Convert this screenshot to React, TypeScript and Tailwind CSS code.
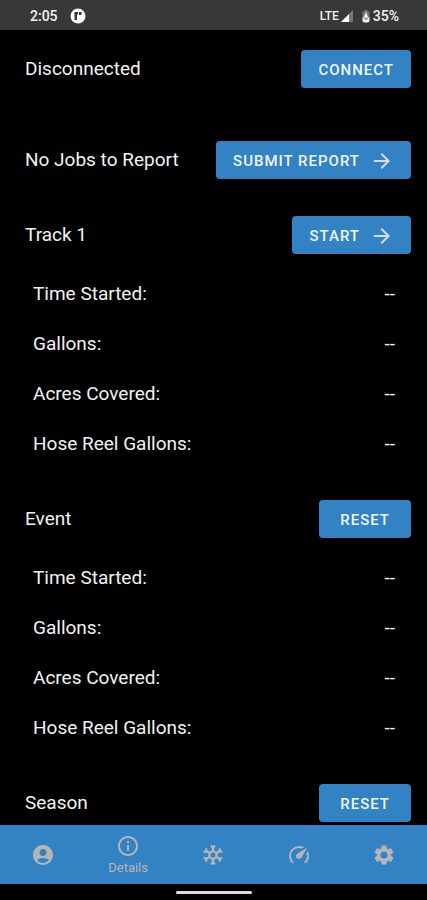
import { useState } from "react";
import { MdAccountCircle, MdArrowForward, MdInfoOutline, MdSettings } from "react-icons/md";

const stats = ["Time Started:", "Gallons:", "Acres Covered:", "Hose Reel Gallons:"];

const button =
  "flex h-[38px] items-center rounded bg-[#3282c4] pt-0.5 text-[15px] font-medium tracking-[1px] text-[#eef6ff]";

function SnowflakeIcon() {
  return (
    <svg viewBox="0 0 24 24" className="size-6" fill="currentColor" stroke="currentColor" strokeWidth="0.4" aria-hidden="true">
      <path d="M20.79 13.95 18.46 14.57 16.46 13.44V10.56L18.46 9.43 20.79 10.05 21.31 8.12 19.54 7.65 20 5.88 18.07 5.36 17.45 7.69 15.45 8.82 13 7.38V5.12L14.71 3.41 13.29 2 12 3.29 10.71 2 9.29 3.41 11 5.12V7.38L8.5 8.82 6.5 7.69 5.92 5.36 4 5.88 4.47 7.65 2.7 8.12 3.22 10.05 5.55 9.43 7.55 10.56V13.45L5.55 14.58 3.22 13.96 2.7 15.89 4.47 16.36 4 18.12 5.93 18.64 6.55 16.31 8.55 15.18 11 16.62V18.88L9.29 20.59 10.71 22 12 20.71 13.29 22 14.7 20.59 13 18.88V16.62L15.5 15.17 17.5 16.3 18.12 18.63 20 18.12 19.53 16.35 21.3 15.88ZM9.5 10.56 12 9.11 14.5 10.56V13.44L12 14.89 9.5 13.44Z" fillRule="evenodd" />
    </svg>
  );
}

function SpeedometerIcon() {
  return (
    <svg viewBox="0 0 24 24" className="size-6" fill="currentColor" aria-hidden="true">
      <path d="M12 16A3 3 0 0 1 9 13C9 11.88 9.61 10.9 10.5 10.39L20.21 4.77 14.68 14.35C14.18 15.33 13.17 16 12 16M12 3C13.81 3 15.5 3.5 16.97 4.32L14.87 5.53C14 5.19 13 5 12 5A8 8 0 0 0 4 13C4 15.21 4.89 17.21 6.34 18.65H6.35C6.74 19.04 6.74 19.67 6.35 20.06 5.96 20.45 5.32 20.45 4.93 20.07A9.97 9.97 0 0 1 2 13 10 10 0 0 1 12 3M22 13C22 15.76 20.88 18.26 19.07 20.07 18.68 20.45 18.05 20.45 17.66 20.06 17.27 19.67 17.27 19.04 17.66 18.65A7.98 7.98 0 0 0 20 13C20 12 19.81 11 19.46 10.1L20.67 8C21.5 9.5 22 11.18 22 13Z" />
    </svg>
  );
}

const tabs = [
  { name: "Account", icon: <MdAccountCircle className="size-6" /> },
  { name: "Details", icon: <MdInfoOutline className="size-6" /> },
  { name: "Freeze", icon: <SnowflakeIcon /> },
  { name: "Speed", icon: <SpeedometerIcon /> },
  { name: "Settings", icon: <MdSettings className="size-6" /> },
];

function StatusBar() {
  return (
    <header className="flex h-[30px] shrink-0 items-center justify-between bg-[#383838] pt-0.5 pr-7 pl-[30px] text-sm font-medium">
      <div className="flex items-center gap-3">
        <span>2:05</span>
        <svg viewBox="0 0 16 16" className="size-4" aria-hidden="true">
          <circle cx="8" cy="8" r="7.5" fill="#fff" />
          <path d="M4.500 4H8v2.500H7V12H4.500zM9 4h2.500v3H9z" fill="#383838" />
        </svg>
      </div>
      <div className="flex items-center gap-0.5">
        <span className="text-xs">LTE</span>
        <svg viewBox="0 0 12 12" className="size-3" aria-hidden="true">
          <path d="M12 0v12H0z" fill="#777" />
          <path d="M8 4v8H0z" fill="#fff" />
        </svg>
        <svg viewBox="0 0 10 14" className="ml-1.5 h-3.5 w-2.5" aria-hidden="true">
          <path d="M3.500 1h3v1.500H8.500V8h-7V2.500h2z" fill="#777" />
          <path d="M1.500 8h7v3.500a2 2 0 0 1-2 2h-3a2 2 0 0 1-2-2z" fill="#eee" />
          <path d="M5 3 7 8H3z" fill="#fff" />
          <path d="M3 8.500 5 10.500l2-2" stroke="#383838" fill="none" />
        </svg>
        <span>35%</span>
      </div>
    </header>
  );
}

function Stats() {
  return (
    <dl className="mt-[15px] mb-[31px] pr-4 pl-2">
      {stats.map((label) => (
        <div key={label} className="flex h-[50px] items-center justify-between">
          <dt>{label}</dt>
          <dd>--</dd>
        </div>
      ))}
    </dl>
  );
}

export default function App() {
  const [active, setActive] = useState("Details");

  return (
    <div className="flex h-screen flex-col bg-black font-['Roboto',sans-serif] text-[19px] text-[#f2f2f2]">
      <StatusBar />
      <main className="min-h-0 flex-1 overflow-hidden pt-5 pr-4 pl-[25px]">
        <div className="flex items-center justify-between">
          <p>Disconnected</p>
          <button type="button" className={`${button} px-[17px]`}>CONNECT</button>
        </div>
        <div className="mt-[53px] flex items-center justify-between">
          <p>No Jobs to Report</p>
          <button type="button" className={`${button} gap-[10px] px-[17px]`}>
            SUBMIT REPORT
            <MdArrowForward className="size-6 text-[#d6dbe0]" />
          </button>
        </div>
        <section className="mt-[37px]">
          <div className="flex items-center justify-between">
            <h2>Track 1</h2>
            <button type="button" className={`${button} gap-[10px] px-[17px]`}>
              START
              <MdArrowForward className="size-6 text-[#d6dbe0]" />
            </button>
          </div>
          <Stats />
        </section>
        <section>
          <div className="flex items-center justify-between">
            <h2>Event</h2>
            <button type="button" className={`${button} px-[21px]`}>RESET</button>
          </div>
          <Stats />
        </section>
        <section>
          <div className="flex items-center justify-between">
            <h2>Season</h2>
            <button type="button" className={`${button} px-[21px]`}>RESET</button>
          </div>
        </section>
      </main>
      <nav className="grid h-[59px] shrink-0 grid-cols-5 bg-[#3282c4] text-[#b5b5b5]">
        {tabs.map((tab) => (
          <button
            key={tab.name}
            type="button"
            aria-label={tab.name}
            onClick={() => setActive(tab.name)}
            className="flex flex-col items-center justify-center"
          >
            {tab.icon}
            {active === tab.name && <span className="pt-0.5 text-[13px] leading-4">{tab.name}</span>}
          </button>
        ))}
      </nav>
      <div className="flex h-4 shrink-0 items-center justify-center">
        <div className="h-[3px] w-[76px] rounded-full bg-[#ddd]" />
      </div>
    </div>
  );
}
